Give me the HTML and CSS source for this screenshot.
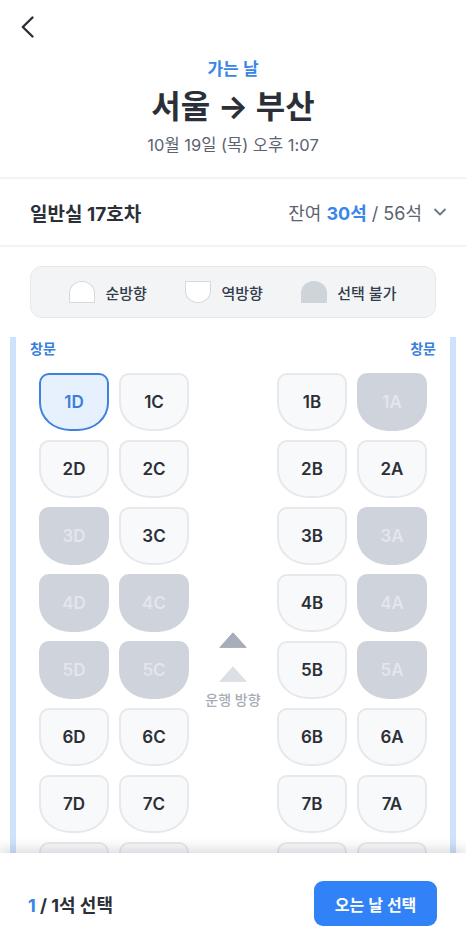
FILE: index.html
```html
<!DOCTYPE html>
<html lang="ko">
<head>
<meta charset="utf-8">
<title>좌석 선택</title>
<link rel="stylesheet" href="styles.css">
</head>
<body>
<div class="app">
  <header class="top">
    <button class="back" aria-label="뒤로">
      <svg width="30" height="30" viewBox="0 0 30 30"><path d="M20.5 5.5 L10.8 15 L20.5 24.5" fill="none" stroke="#2b2f36" stroke-width="2.4" stroke-linecap="round" stroke-linejoin="round"/></svg>
    </button>
    <div class="trip">
      <div class="trip-label">가는 날</div>
      <h1 class="route">서울 → 부산</h1>
      <div class="date">10월 19일 (목) 오후 1:07</div>
    </div>
  </header>

  <div class="car-row">
    <div class="car-name">일반실 17호차</div>
    <div class="car-remain">
      <span>잔여 </span><strong class="blue">30석</strong><span> / 56석</span>
      <svg class="caret" width="14" height="14" viewBox="0 0 14 14"><path d="M2 4.5 L7 9.5 L12 4.5" fill="none" stroke="#6b7684" stroke-width="1.8" stroke-linecap="round" stroke-linejoin="round"/></svg>
    </div>
  </div>

  <div class="legend">
    <div class="legend-item"><span class="icon icon-fwd"></span><span>순방향</span></div>
    <div class="legend-item"><span class="icon icon-rev"></span><span>역방향</span></div>
    <div class="legend-item"><span class="icon icon-off"></span><span>선택 불가</span></div>
  </div>

  <main class="cabin">
    <div class="windows"><span>창문</span><span>창문</span></div>
    <div class="seat-grid">
      <div class="direction">
        <svg width="28" height="16" viewBox="0 0 28 16"><polygon points="14,0.8 27.2,15.4 0.8,15.4" fill="#a7aeb9" stroke="#a7aeb9" stroke-width="1" stroke-linejoin="round"/></svg>
        <svg class="tri2" width="28" height="16" viewBox="0 0 28 16"><polygon points="14,0.8 27.2,15.4 0.8,15.4" fill="#dcdfe4" stroke="#dcdfe4" stroke-width="1" stroke-linejoin="round"/></svg>
        <span class="direction-text">운행 방향</span>
      </div>

      <div class="seat col-d selected">1D</div>
      <div class="seat col-c">1C</div>
      <div class="seat col-b">1B</div>
      <div class="seat col-a off">1A</div>

      <div class="seat col-d">2D</div>
      <div class="seat col-c">2C</div>
      <div class="seat col-b">2B</div>
      <div class="seat col-a">2A</div>

      <div class="seat col-d off">3D</div>
      <div class="seat col-c">3C</div>
      <div class="seat col-b">3B</div>
      <div class="seat col-a off">3A</div>

      <div class="seat col-d off">4D</div>
      <div class="seat col-c off">4C</div>
      <div class="seat col-b">4B</div>
      <div class="seat col-a off">4A</div>

      <div class="seat col-d off">5D</div>
      <div class="seat col-c off">5C</div>
      <div class="seat col-b">5B</div>
      <div class="seat col-a off">5A</div>

      <div class="seat col-d">6D</div>
      <div class="seat col-c">6C</div>
      <div class="seat col-b">6B</div>
      <div class="seat col-a">6A</div>

      <div class="seat col-d">7D</div>
      <div class="seat col-c">7C</div>
      <div class="seat col-b">7B</div>
      <div class="seat col-a">7A</div>

      <div class="seat col-d" aria-label="8D"></div>
      <div class="seat col-c" aria-label="8C"></div>
      <div class="seat col-b" aria-label="8B"></div>
      <div class="seat col-a" aria-label="8A"></div>
    </div>
  </main>

  <footer class="bottom">
    <div class="count"><span class="blue">1</span> / 1석 선택</div>
    <button class="next">오는 날 선택</button>
  </footer>
</div>
</body>
</html>
```

FILE: styles.css
```css
* { box-sizing: border-box; }

html, body {
  margin: 0;
  padding: 0;
  background: #ffffff;
}

body {
  font-family: "Inter", "Noto Sans CJK KR", sans-serif;
  color: #333d4b;
}

.app {
  height: 100vh;
  display: flex;
  flex-direction: column;
  overflow: hidden;
}

.blue { color: #3a86e8; }

/* Header */
.top {
  flex: none;
  padding: 12px 0 21px;
  border-bottom: 2px solid #f2f4f6;
}

.back {
  display: block;
  width: 30px;
  height: 30px;
  margin-left: 12px;
  padding: 0;
  border: 0;
  background: none;
}
.back svg { display: block; }

.trip {
  display: flex;
  flex-direction: column;
  align-items: center;
}

.trip-label {
  margin-top: 15px;
  font-size: 17px;
  line-height: 24px;
  font-weight: 600;
  color: #3a86e8;
}

.route {
  margin: 6px 0 0;
  font-size: 32px;
  line-height: 40px;
  font-weight: 700;
  color: #2b3038;
}

.date {
  margin-top: 7px;
  font-size: 16.5px;
  line-height: 22px;
  color: #5b6370;
}

/* Car row */
.car-row {
  flex: none;
  height: 68px;
  padding: 0 19px 0 30px;
  border-bottom: 2px solid #f2f4f6;
  display: flex;
  align-items: center;
  justify-content: space-between;
}

.car-name {
  font-size: 19px;
  font-weight: 700;
  color: #2b3038;
}

.car-remain {
  display: flex;
  align-items: center;
  font-size: 18px;
  color: #5b6370;
  white-space: pre;
}
.car-remain strong { font-weight: 700; }
.caret { margin-left: 11px; display: block; }

/* Legend */
.legend {
  flex: none;
  margin: 19px 30px 0;
  height: 52px;
  border: 1px solid #e5e8eb;
  border-radius: 12px;
  background: #f3f4f6;
  display: flex;
  align-items: center;
  justify-content: space-evenly;
}

.legend-item {
  display: flex;
  align-items: center;
  gap: 10px;
  font-size: 15px;
  font-weight: 500;
  color: #333d4b;
}

.icon {
  display: block;
  width: 26px;
  height: 22px;
}
.icon-fwd {
  background: #ffffff;
  border: 1px solid #d5d9de;
  border-radius: 13px 13px 1px 1px / 12px 12px 1px 1px;
}
.icon-rev {
  background: #ffffff;
  border: 1px solid #d5d9de;
  border-radius: 1px 1px 13px 13px / 1px 1px 12px 12px;
}
.icon-off {
  background: #cfd4db;
  border-radius: 13px 13px 1px 1px / 12px 12px 1px 1px;
}

/* Cabin */
.cabin {
  flex: 1 1 auto;
  min-height: 0;
  overflow: hidden;
  margin: 19px 10px 0;
  padding: 2px 14px 0;
  border-left: 6px solid #cde2fb;
  border-right: 6px solid #cde2fb;
}

.windows {
  display: flex;
  justify-content: space-between;
  font-size: 14px;
  line-height: 20px;
  font-weight: 700;
  color: #3a80dc;
}

.seat-grid {
  margin-top: 14px;
  display: grid;
  grid-template-columns: 70px 70px 68px 70px 70px;
  grid-auto-rows: 58px;
  column-gap: 10px;
  row-gap: 9px;
  justify-content: center;
}

.seat {
  display: flex;
  align-items: center;
  justify-content: center;
  background: #f8f9fa;
  border: 2px solid #e6e8eb;
  border-radius: 10px 10px 31px 31px / 10px 10px 28px 28px;
  font-size: 17px;
  font-weight: 600;
  color: #2b3038;
}

.col-d { grid-column: 1; }
.col-c { grid-column: 2; }
.col-b { grid-column: 4; }
.col-a { grid-column: 5; }

.seat.selected {
  background: #e7f1fe;
  border-color: #3f82dc;
  color: #3a7fd9;
}

.seat.off {
  background: #cfd3db;
  border-color: #cfd3db;
  color: #e3e6ea;
}

.direction {
  grid-column: 3;
  grid-row: 4 / span 3;
  align-self: center;
  display: flex;
  flex-direction: column;
  align-items: center;
}
.direction svg { display: block; }
.direction .tri2 { margin-top: 18px; }
.direction-text {
  margin-top: 9px;
  font-size: 14px;
  line-height: 18px;
  font-weight: 500;
  color: #a7adb6;
  white-space: nowrap;
}

/* Footer */
.bottom {
  flex: none;
  position: relative;
  z-index: 1;
  height: 85px;
  padding: 28px 29px 12px 28px;
  background: #ffffff;
  box-shadow: 0 -5px 10px rgba(60, 70, 85, 0.16);
  display: flex;
  align-items: center;
  justify-content: space-between;
}

.count {
  font-size: 18px;
  font-weight: 700;
  color: #2b3038;
}

.next {
  height: 45px;
  width: 123px;
  border: 0;
  border-radius: 9px;
  background: #3182f6;
  color: #ffffff;
  font-family: "Inter", "Noto Sans CJK KR", sans-serif;
  font-size: 16px;
  font-weight: 600;
}
```
